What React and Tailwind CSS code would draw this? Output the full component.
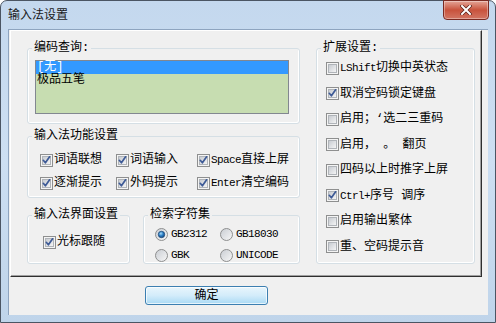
import React, { useId } from "react";

function Check({ checked }) {
  const id = useId();
  return (
    <svg width="13" height="13" viewBox="0 0 13 13" className="shrink-0 block">
      <defs>
        <linearGradient id={id} x1="0" y1="0" x2="1" y2="1">
          <stop offset="0" stopColor="#c5c9cf" />
          <stop offset="1" stopColor="#f7f7f7" />
        </linearGradient>
      </defs>
      <rect x="0.5" y="0.5" width="12" height="12" fill="#f4f4f4" stroke="#8e8f8f" />
      <rect x="2.5" y="2.5" width="8" height="8" fill={`url(#${id})`} stroke="#b0b4b9" />
      {checked && (
        <path d="M3.3 6.3 L5.4 8.8 L9.6 2.8" fill="none" stroke="#3d5a96" strokeWidth="1.7" strokeLinecap="round" strokeLinejoin="round" />
      )}
    </svg>
  );
}

function Radio({ checked }) {
  const id = useId();
  const id2 = useId();
  return (
    <svg width="13" height="13" viewBox="0 0 13 13" className="shrink-0 block">
      <defs>
        <linearGradient id={id} x1="0" y1="0" x2="1" y2="1">
          <stop offset="0" stopColor="#c8ccd2" />
          <stop offset="1" stopColor="#f8f8f8" />
        </linearGradient>
        <radialGradient id={id2} cx="0.4" cy="0.35" r="0.7">
          <stop offset="0" stopColor="#a9dcf8" />
          <stop offset="0.5" stopColor="#2a7fc7" />
          <stop offset="1" stopColor="#17457a" />
        </radialGradient>
      </defs>
      <circle cx="6.5" cy="6.5" r="6" fill={`url(#${id})`} stroke="#8e8f8f" />
      {checked && <circle cx="6.5" cy="6.5" r="3.2" fill={`url(#${id2})`} stroke="#1f4a78" strokeWidth="0.8" />}
    </svg>
  );
}

const Lat = ({ children }) => (
  <span className="text-[11px] tracking-[-0.6px] [font-family:'Liberation_Mono',monospace] font-normal">{children}</span>
);

function CB({ checked, children }) {
  return (
    <div className="flex items-center gap-[1px] h-[14px] leading-[14px] text-[12px] whitespace-nowrap">
      <Check checked={checked} />
      <span>{children}</span>
    </div>
  );
}

function RB({ checked, children }) {
  return (
    <div className="flex items-center gap-[3px] h-[14px] leading-[14px] text-[12px] whitespace-nowrap">
      <Radio checked={checked} />
      <span>
        <Lat>{children}</Lat>
      </span>
    </div>
  );
}

function Group({ label, className, children }) {
  return (
    <fieldset className={`border border-[#d5dfe5] rounded-[3px] p-0 min-w-0 shadow-[inset_1px_0_0_#fff,inset_-1px_-1px_0_#fff] ${className}`}>
      <legend className="ml-[4px] px-[2px] text-[12px] leading-[12px] whitespace-nowrap">{label}</legend>
      {children}
    </fieldset>
  );
}

export default function App() {
  return (
    <div className="w-[496px] h-[323px] overflow-hidden bg-white">
      <div className="w-[496px] h-[323px] rounded-t-[7px] border border-[#4b5563] bg-gradient-to-b from-[#c4d8ee] via-[#cddff2] to-[#bfd4ea] flex flex-col text-black [font-family:'Liberation_Mono','Noto_Sans_CJK_SC',monospace]">
        {/* Title bar */}
        <div className="h-[28px] flex justify-between items-start shrink-0">
          <div className="self-center ml-[7px] mt-[-2px] text-[12px] leading-[14px] [font-family:'Noto_Sans_CJK_SC',sans-serif] text-[#1a1a1a]">
            输入法设置
          </div>
          <div className="mr-[6px] mt-[-1px] w-[46px] h-[20px] rounded-b-[4px] border border-[#7a2a22] bg-gradient-to-b from-[#e3a497] via-[#c8523c] to-[#d27563] flex items-center justify-center shadow-[inset_0_0_0_1px_rgba(255,255,255,0.35)]">
            <svg width="12" height="10" viewBox="0 0 12 10">
              <path d="M2 1 L10 9 M10 1 L2 9" stroke="#5a2018" strokeWidth="3.4" strokeLinecap="square" />
              <path d="M2 1 L10 9 M10 1 L2 9" stroke="#ffffff" strokeWidth="2" strokeLinecap="square" />
            </svg>
          </div>
        </div>

        {/* Client area */}
        <div className="ml-[7px] w-[480px] h-[286px] bg-[#f0f0f0] border-t border-l border-[#8ea4bf] shrink-0">
          {/* Panel */}
          <div className="ml-[1px] w-[472px] h-[247px] border-t border-l border-white border-r border-b border-r-[#2f2f2f] border-b-[#2f2f2f] shadow-[inset_-1px_-1px_0_#a0a0a0] flex pt-[11px] pl-[16px]">
            {/* left column */}
            <div className="flex flex-col w-[273px]">
              <Group label="编码查询:" className="h-[82px]">
                <div className="pl-[7px] pt-[6px]">
                  <div className="w-[254px] h-[54px] border border-[#828790] bg-[#c7ddb1] text-[12px] leading-[13px]">
                    <div className="h-[13px] bg-[#3399ff] text-white pl-[1px]">[无]</div>
                    <div className="h-[13px] pl-[1px]">极品五笔</div>
                  </div>
                </div>
              </Group>

              <Group label="输入法功能设置" className="mt-[6px] h-[68px]">
                <div className="pl-[12px] pt-[11px] grid grid-cols-[76px_81px_auto] gap-y-[9px]">
                  <CB checked>词语联想</CB>
                  <CB checked>词语输入</CB>
                  <CB checked><Lat>Space</Lat>直接上屏</CB>
                  <CB checked>逐渐提示</CB>
                  <CB checked>外码提示</CB>
                  <CB checked><Lat>Enter</Lat>清空编码</CB>
                </div>
              </Group>

              <div className="mt-[11px] flex gap-[13px]">
                <Group label="输入法界面设置" className="w-[103px] h-[55px]">
                  <div className="pl-[15px] pt-[14px]">
                    <CB checked>光标跟随</CB>
                  </div>
                </Group>
                <Group label="检索字符集" className="w-[157px] h-[55px]">
                  <div className="pl-[11px] pt-[6px] grid grid-cols-[65px_auto] gap-y-[7px]">
                    <RB checked>GB2312</RB>
                    <RB>GB18030</RB>
                    <RB>GBK</RB>
                    <RB>UNICODE</RB>
                  </div>
                </Group>
              </div>
            </div>

            {/* right column */}
            <Group label="扩展设置:" className="ml-[16px] w-[159px] h-[222px]">
              <div className="pl-[9px] pt-[7px] h-[200px] flex flex-col justify-between">
                <CB><Lat>LShift</Lat>切换中英状态</CB>
                <CB checked>取消空码锁定键盘</CB>
                <CB>启用；‘选二三重码</CB>
                <CB>启用， 。 翻页</CB>
                <CB>四码以上时推字上屏</CB>
                <CB checked><Lat>Ctrl+</Lat>序号 调序</CB>
                <CB>启用输出繁体</CB>
                <CB>重、空码提示音</CB>
              </div>
            </Group>
          </div>

          {/* Button */}
          <div className="mt-[9px] ml-[136px] w-[123px] h-[19px] rounded-[3px] border border-[#3c7fb1] bg-gradient-to-b from-[#e8f5fc] via-[#d3ecfa] to-[#a9d9f4] shadow-[inset_0_0_0_1px_rgba(255,255,255,0.7)] flex items-center justify-center text-[12px] leading-[14px]">
            确定
          </div>
        </div>
      </div>
    </div>
  );
}
